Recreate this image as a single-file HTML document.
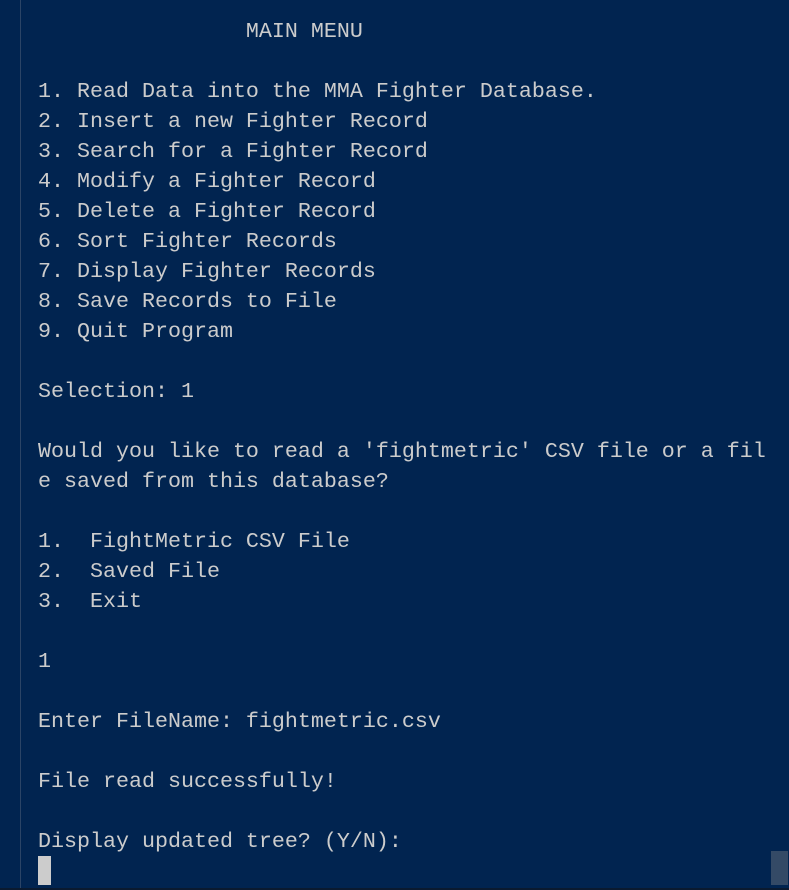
<!DOCTYPE html>
<html><head><style>
html,body{margin:0;padding:0;width:789px;height:890px;overflow:hidden;background:#012450;}
.l{position:absolute;left:20px;top:0;width:1px;height:890px;background:#2b4466;}
pre{position:absolute;left:38px;top:17px;margin:0;font-family:"Liberation Mono",monospace;font-size:21.67px;line-height:30px;color:#cccccc;white-space:pre;}
.cur{position:absolute;left:38px;top:856px;width:13px;height:29px;background:#cccccc;}
.sb{position:absolute;left:771px;top:851px;width:17px;height:34px;background:#344a66;}
.b{position:absolute;left:0;top:888px;width:789px;height:2px;background:#0a1a30;}
</style></head><body>
<div class="l"></div>
<pre>                MAIN MENU

1. Read Data into the MMA Fighter Database.
2. Insert a new Fighter Record
3. Search for a Fighter Record
4. Modify a Fighter Record
5. Delete a Fighter Record
6. Sort Fighter Records
7. Display Fighter Records
8. Save Records to File
9. Quit Program

Selection: 1

Would you like to read a 'fightmetric' CSV file or a fil
e saved from this database?

1.  FightMetric CSV File
2.  Saved File
3.  Exit

1

Enter FileName: fightmetric.csv

File read successfully!

Display updated tree? (Y/N):</pre>
<div class="cur"></div>
<div class="sb"></div>
<div class="b"></div>
</body></html>
